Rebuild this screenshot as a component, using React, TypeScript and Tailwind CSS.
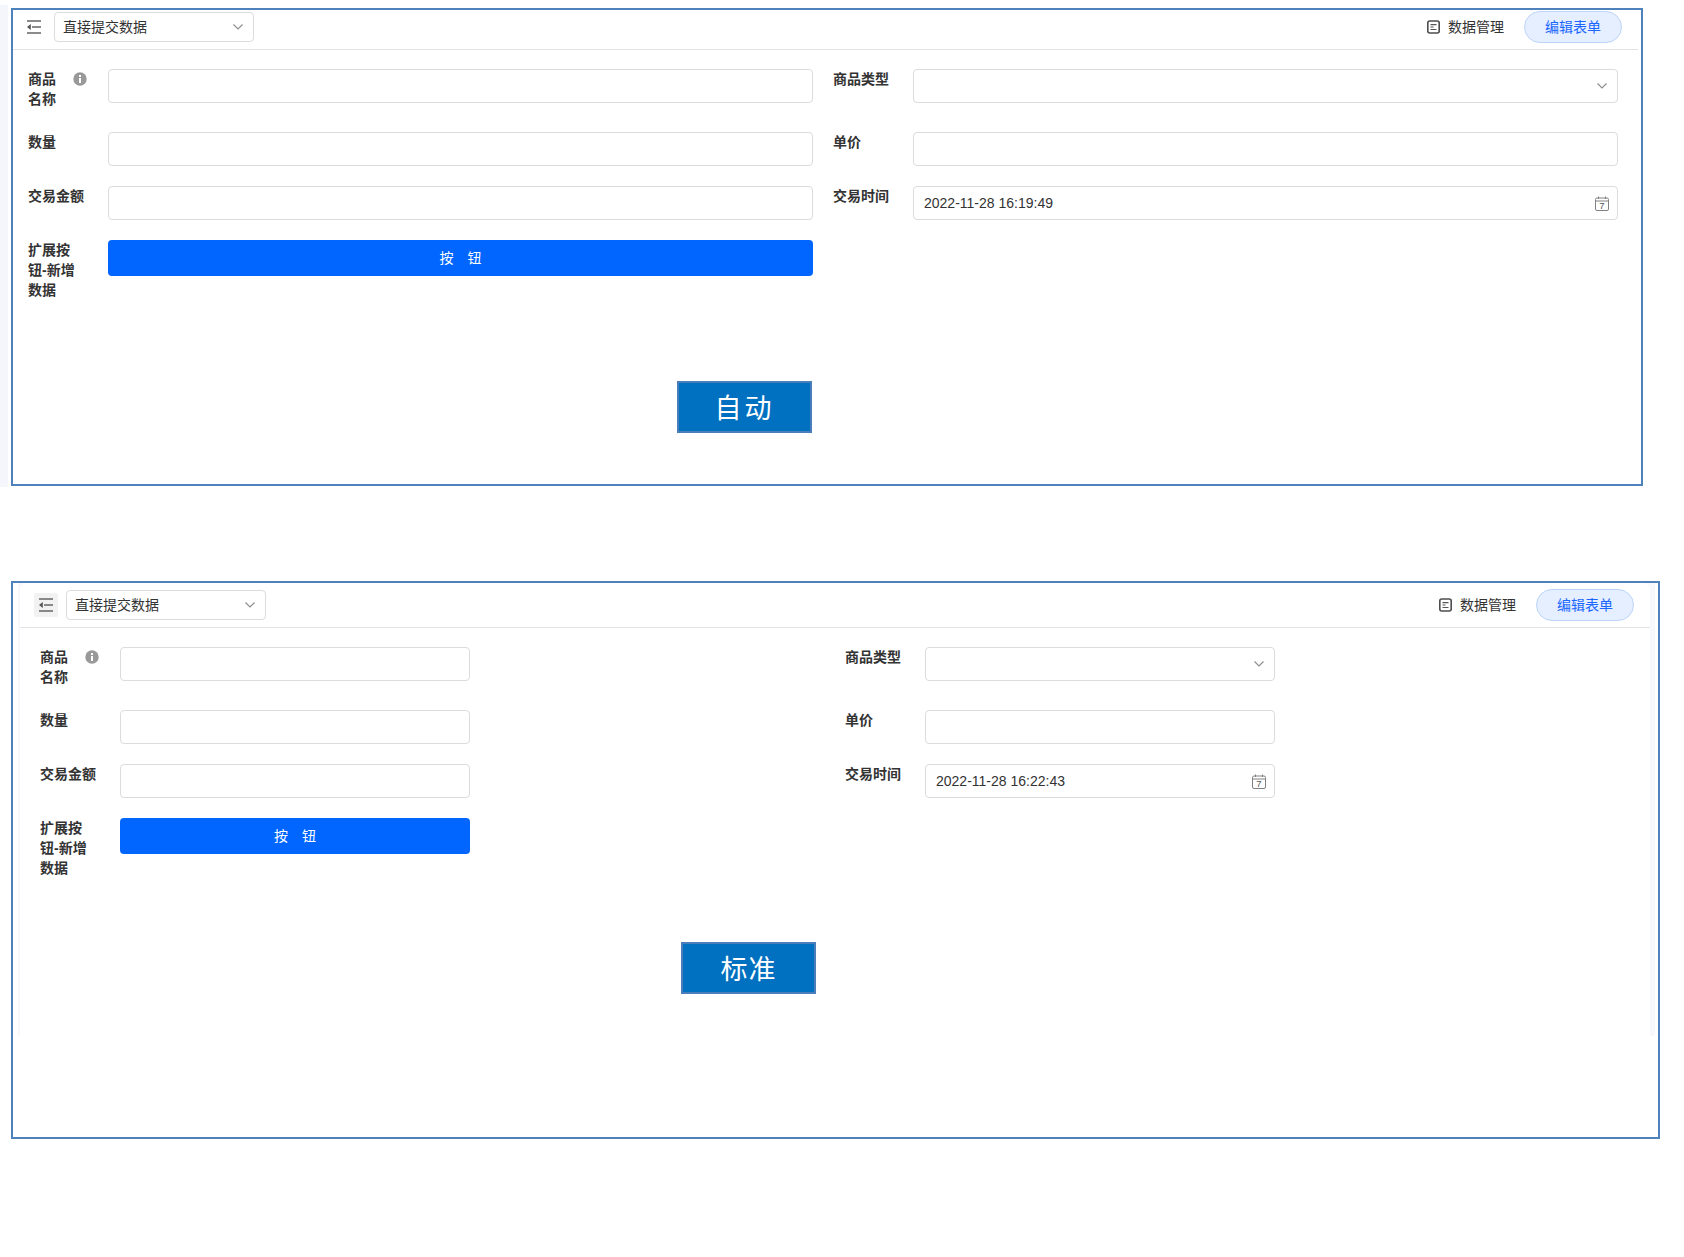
import React from "react";

const FONT = "font-['Liberation_Sans','Noto_Sans_CJK_SC',sans-serif]";

function MenuIcon() {
  return (
    <svg width="14" height="14" viewBox="0 0 14 14" fill="none">
      <path d="M0 1h14M5 7h9M0 13h14" stroke="#666" strokeWidth="1.500" />
      <path d="M0 7l3.800-3v6z" fill="#555" />
    </svg>
  );
}
function Chevron() {
  return (
    <svg width="10" height="6" viewBox="0 0 10 6" fill="none">
      <path d="M.5.5L5 5 9.500.5" stroke="#8c8c8c" strokeWidth="1.1" />
    </svg>
  );
}
function InfoIcon() {
  return (
    <svg width="14" height="14" viewBox="0 0 14 14">
      <circle cx="7" cy="7" r="6.700" fill="#999" />
      <rect x="6" y="3" width="2" height="2" fill="#fff" />
      <rect x="6" y="6" width="2" height="5" fill="#fff" />
    </svg>
  );
}
function DataIcon() {
  return (
    <svg width="13" height="14" viewBox="0 0 13 14" fill="none">
      <rect x=".8" y="1" width="11.400" height="12" rx="2" stroke="#4d4d4d" strokeWidth="1.6" />
      <path d="M3.500 4.700h6M3.500 7h3M3.500 9.500h6" stroke="#555" strokeWidth="1.200" />
    </svg>
  );
}
function CalendarIcon() {
  return (
    <svg width="14" height="15" viewBox="0 0 14 15" fill="none">
      <rect x=".5" y="2" width="13" height="12.500" rx="1.500" stroke="#808080" />
      <path d="M.5 5h13M3.500.5v2.500M10.500.5v2.500" stroke="#808080" />
      <text x="7" y="13.200" textAnchor="middle" fontSize="9.500" fill="#555" fontFamily="Liberation Sans">7</text>
    </svg>
  );
}

function Toolbar({ tall }: { tall: boolean }) {
  return (
    <div
      className={
        tall
          ? "flex h-[45px] items-start justify-between border-b border-[#e3e3e3] pr-4 pl-[14px] pt-[6px]"
          : "mr-[3px] flex h-[40px] items-start justify-between border-b border-[#e3e3e3] pr-4 pl-[9px] pt-px"
      }
    >
      <div className="flex h-8 items-center gap-2">
        <div className={tall ? "flex h-6 w-6 items-center justify-center rounded-[2px] bg-[#f2f2f2]" : "flex h-6 w-6 items-center justify-center"}>
          <MenuIcon />
        </div>
        <div className="flex h-[30px] w-[200px] items-center justify-between rounded-[4px] border border-[#dcdcdc] pr-[10px] pl-2 text-sm text-[#333]">
          <span>直接提交数据</span>
          <Chevron />
        </div>
      </div>
      <div className="flex h-8 items-center gap-5">
        <div className="flex items-center gap-2 text-sm text-[#333]">
          <DataIcon />
          <span>数据管理</span>
        </div>
        <div className="flex h-8 w-[98px] items-center justify-center rounded-full border border-[#bcd5f9] bg-[#e5efff] text-sm text-[#1a66ff]">
          编辑表单
        </div>
      </div>
    </div>
  );
}

function Input({ value, icon }: { value?: string; icon?: React.ReactNode }) {
  return (
    <div className="flex h-[34px] items-center justify-between rounded-[4px] border border-[#dcdcdc] bg-white pr-2 pl-[10px] text-sm text-[#333]">
      <span>{value}</span>
      {icon}
    </div>
  );
}

function Label({ text, pad }: { text: string; pad?: string }) {
  return <div className={`text-sm leading-5 font-semibold text-[#333] ${pad ?? ""}`}>{text}</div>;
}

function Form({ time, wide }: { time: string; wide: boolean }) {
  const pad = wide ? "pl-5" : "pl-[375px]";
  return (
    <div
      className={
        wide
          ? "grid grid-cols-[80px_705px_100px_705px] gap-y-5 pt-[19px] pl-[15px]"
          : "grid grid-cols-[80px_350px_455px_350px] gap-y-5 pt-[19px] pl-5"
      }
    >
      <div className="flex items-start pb-[3px] text-sm leading-5 font-semibold text-[#333]">
        <span className="w-[45px]">商品 名称</span>
        <span className="mt-[3px]">
          <InfoIcon />
        </span>
      </div>
      <Input />
      <Label text="商品类型" pad={pad} />
      <Input icon={<span className="mr-[2px] flex"><Chevron /></span>} />

      <Label text="数量" />
      <Input />
      <Label text="单价" pad={pad} />
      <Input />

      <Label text="交易金额" />
      <Input />
      <Label text="交易时间" pad={pad} />
      <Input value={time} icon={<CalendarIcon />} />

      <div className="w-[50px] text-sm leading-5 font-semibold text-[#333]">扩展按钮-新增数据</div>
      <button className="flex h-9 items-center justify-center rounded-[4px] bg-[#0066ff] text-sm text-white">按　钮</button>
    </div>
  );
}

function Tag({ text, cls }: { text: string; cls: string }) {
  return (
    <div
      className={`flex h-[52px] w-[135px] items-center justify-center border-2 border-[#4a7ebb] bg-[#0070c0] pt-[5px] text-[27px] text-white ${cls}`}
    >
      {text}
    </div>
  );
}

export default function App() {
  return (
    <div className={`min-h-[1257px] bg-white pt-[5px] ${FONT}`}>
      <div className="flex h-[482px]">
        <div className="w-2 bg-[#f4f6fb]" />
        <div className="mt-[3px] ml-[3px] h-[478px] w-[1632px] border-2 border-[#4f81bd]">
          <Toolbar tall={false} />
          <Form time="2022-11-28 16:19:49" wide />
          <Tag text="自动" cls="mt-[81px] ml-[664px] tracking-[3px]" />
        </div>
      </div>
      <div className="mt-[94px] ml-[11px] h-[558px] w-[1649px] border-2 border-[#4f81bd] pr-[3px] pl-[5px]">
        <div className="h-[453px] bg-[#f6f8fc] pr-[5px] pl-[2px]">
          <div className="h-full rounded-t-md bg-white">
            <Toolbar tall />
            <Form time="2022-11-28 16:22:43" wide={false} />
            <Tag text="标准" cls="mt-[64px] ml-[661px] tracking-[1px]" />
          </div>
        </div>
      </div>
    </div>
  );
}
